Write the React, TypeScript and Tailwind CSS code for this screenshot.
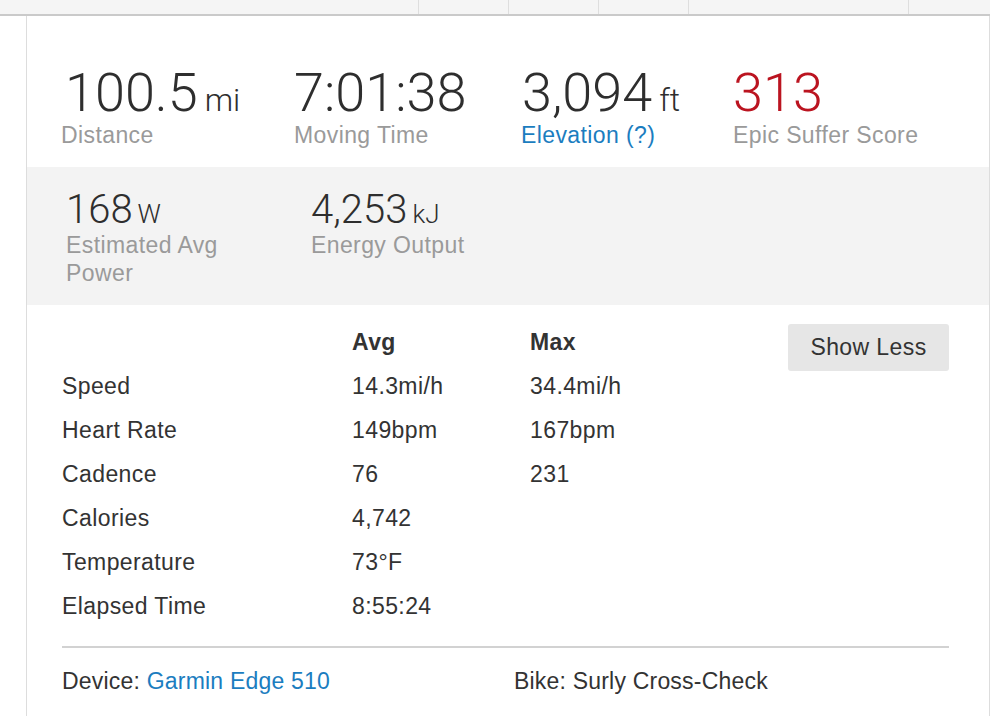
import React from 'react';

const stats = [
  { value: '100.5', unit: 'mi', label: 'Distance', w: 'w-[233px]', pad: 'pl-[4px]', valueColor: 'text-[#2e2e2e]', labelColor: 'text-[#9a9a9a]' },
  { value: '7:01:38', unit: '', label: 'Moving Time', w: 'w-[227px]', pad: 'pl-0', valueColor: 'text-[#2e2e2e]', labelColor: 'text-[#9a9a9a]' },
  { value: '3,094', unit: 'ft', label: 'Elevation (?)', w: 'w-[212px]', pad: 'pl-[1px]', valueColor: 'text-[#2e2e2e]', labelColor: 'text-[#1b7dbf]' },
  { value: '313', unit: '', label: 'Epic Suffer Score', w: 'w-[220px]', pad: 'pl-0', valueColor: 'text-[#bb1420]', labelColor: 'text-[#9a9a9a]' },
];

const rows = [
  { name: 'Speed', avg: '14.3mi/h', max: '34.4mi/h' },
  { name: 'Heart Rate', avg: '149bpm', max: '167bpm' },
  { name: 'Cadence', avg: '76', max: '231' },
  { name: 'Calories', avg: '4,742', max: '' },
  { name: 'Temperature', avg: '73°F', max: '' },
  { name: 'Elapsed Time', avg: '8:55:24', max: '' },
];

export default function App() {
  return (
    <div className="w-[1004px] h-[716px] overflow-hidden bg-white font-['Liberation_Sans',Arial,sans-serif] text-[#333]">
      {/* top tab strip */}
      <div className="flex w-[990px] h-[16px] bg-[#f5f5f5] border-b-2 border-[#cacaca]">
        <div className="w-[419px] border-r border-[#dedede]" />
        <div className="w-[90px] border-r border-[#dedede]" />
        <div className="w-[90px] border-r border-[#dedede]" />
        <div className="w-[90px] border-r border-[#dedede]" />
        <div className="w-[220px] border-r border-[#dedede]" />
        <div className="flex-1" />
      </div>

      <div className="ml-[26px] w-[964px] h-[700px] border-x border-[#dddddd]">
        {/* main stats */}
        <div className="flex pt-[50px] pl-[34px] mb-[18px]">
          {stats.map(s => (
            <div key={s.label} className={s.w}>
              <div className={`font-['Roboto',sans-serif] font-light text-[54px] leading-[53px] h-[53px] ${s.pad} ${s.valueColor}`}>
                {s.value}
                {s.unit && <span className="text-[32px] ml-[7px]">{s.unit}</span>}
              </div>
              <div className={`mt-[2px] text-[23px] leading-[28px] tracking-[0.4px] ${s.labelColor}`}>{s.label}</div>
            </div>
          ))}
        </div>

        {/* power band */}
        <div className="flex bg-[#f3f3f3] pt-[23px] pb-[18px] pl-[39px] h-[138px]">
          <div className="w-[245px]">
            <div className="font-['Roboto',sans-serif] font-light text-[40px] leading-[39px] h-[39px] text-[#2e2e2e]">
              168<span className="text-[26px] ml-[5px]">W</span>
            </div>
            <div className="mt-[2px] w-[190px] text-[23px] leading-[28px] tracking-[0.4px] text-[#9a9a9a]">Estimated Avg Power</div>
          </div>
          <div>
            <div className="font-['Roboto',sans-serif] font-light text-[40px] leading-[39px] h-[39px] text-[#2e2e2e]">
              4,253<span className="text-[26px] ml-[5px]">kJ</span>
            </div>
            <div className="mt-[2px] text-[23px] leading-[28px] tracking-[0.4px] text-[#9a9a9a]">Energy Output</div>
          </div>
        </div>

        {/* detail table */}
        <div className="pt-[15px] pl-[35px] pr-[40px]">
          <div className="flex items-start">
            <div className="flex-1 grid grid-cols-[290px_178px_1fr] text-[23px] leading-[44px] tracking-[0.4px]">
              <div />
              <div className="font-bold">Avg</div>
              <div className="font-bold">Max</div>
              {rows.map(r => (
                <React.Fragment key={r.name}>
                  <div>{r.name}</div>
                  <div>{r.avg}</div>
                  <div>{r.max}</div>
                </React.Fragment>
              ))}
            </div>
            <button className="mt-[4px] w-[161px] h-[47px] bg-[#e6e6e6] rounded-[3px] text-[23px] tracking-[0.4px] text-[#333]">
              Show Less
            </button>
          </div>

          <div className="mt-[18px] h-[2px] bg-[#d2d2d2]" />

          <div className="mt-[19px] flex text-[23px] leading-[28px] tracking-[0.2px]">
            <div className="w-[452px]">
              Device: <span className="text-[#1b7dbf]">Garmin Edge 510</span>
            </div>
            <div>Bike: Surly Cross-Check</div>
          </div>
        </div>
      </div>
    </div>
  );
}
